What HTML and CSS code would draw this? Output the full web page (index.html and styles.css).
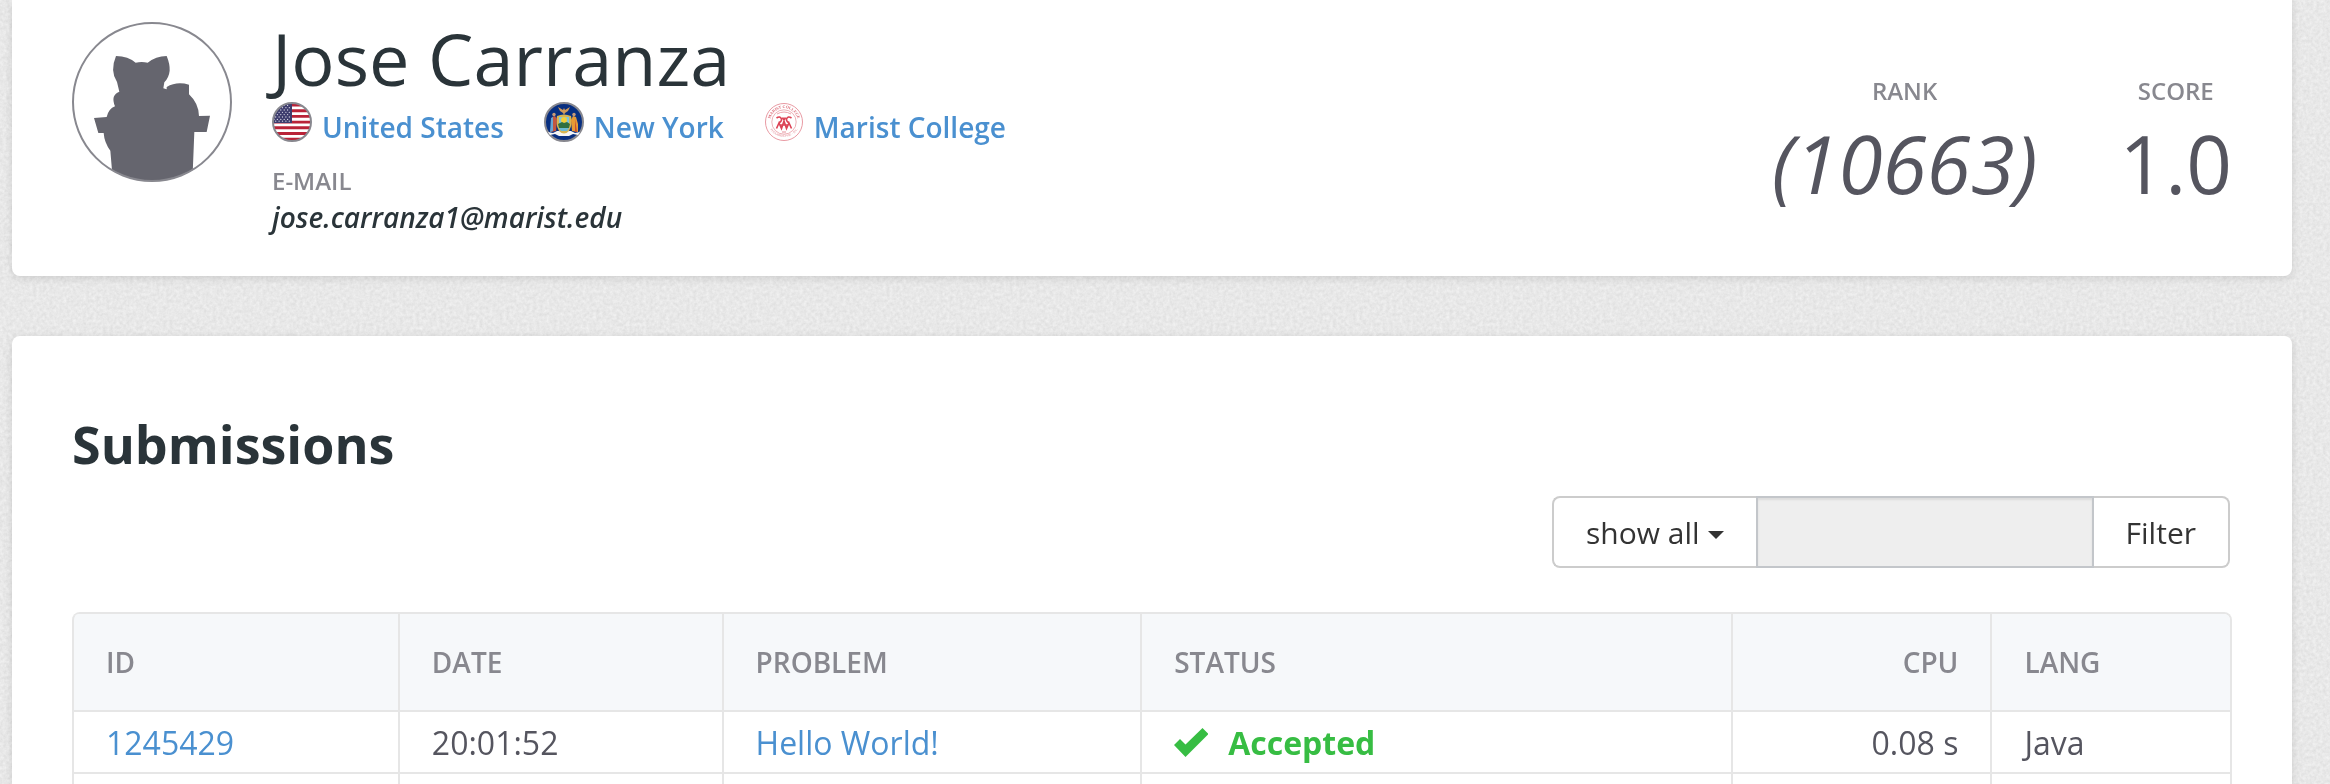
FILE: index.html
```html
<!DOCTYPE html>
<html lang="en">
<head>
<meta charset="utf-8">
<title>Jose Carranza</title>
<link rel="stylesheet" href="styles.css">
</head>
<body>
<svg class="grain" aria-hidden="true">
  <filter id="noise" x="0" y="0" width="100%" height="100%" color-interpolation-filters="sRGB">
    <feTurbulence type="fractalNoise" baseFrequency="0.3" numOctaves="3" seed="4"/>
    <feColorMatrix values="0.1 0 0 0 0.86  0.1 0 0 0 0.86  0.1 0 0 0 0.86  0 0 0 0 1"/>
  </filter>
  <rect width="100%" height="100%" filter="url(#noise)"/>
</svg>
<main class="page">
  <section class="card profile">
    <svg class="avatar" viewBox="216 66 480 480" role="img" aria-label="Profile picture">
      <clipPath id="avatar-clip"><circle cx="456" cy="306" r="238"/></clipPath>
      <path clip-path="url(#avatar-clip)" fill="#65656e" d="M348 168Q385 169 407 188Q425 184 443 188Q467 169 500 168Q510 192 509 212Q507 232 493 247L490 265L500 268V261Q530 243 567 254V283Q596 310 597 348L630 347L620 396H583L577 546H339L331 452Q313 428 311 399H295L282 354L320 351Q326 326 345 319Q331 285 358 275L351 246Q329 213 348 168Z"/>
      <circle cx="456" cy="306" r="237" fill="none" stroke="#88888f" stroke-width="6"/>
    </svg>
    <div class="identity">
      <h1>Jose Carranza</h1>
      <ul class="places">
        <li>
          <svg class="flag" viewBox="0 0 40 40" aria-hidden="true">
            <clipPath id="us"><circle cx="20" cy="20" r="19"/></clipPath>
            <g clip-path="url(#us)">
              <rect width="40" height="40" fill="#fff"/>
              <path stroke="#b92338" stroke-width="2.9" d="M0 3H40M0 8.7H40M0 14.4H40M0 20.1H40M0 25.8H40M0 31.5H40M0 37.2H40"/>
              <rect width="20" height="21" fill="#3e3d6e"/>
              <g stroke="#d5d5e2" stroke-width="1.3" stroke-linecap="round" stroke-dasharray="0 3.4"><path d="M2 3.4H19M2 8H19M2 12.6H19M2 17.4H19"/><path d="M3.7 5.7H19M3.7 10.3H19M3.7 15H19M3.7 19.2H19"/></g>
            </g>
            <circle cx="20" cy="20" r="19" fill="none" stroke="#88888f" stroke-width="2"/>
          </svg>
          <a href="#">United States</a>
        </li>
        <li>
          <svg class="flag" viewBox="0 0 40 40" aria-hidden="true">
            <circle cx="20" cy="20" r="19" fill="#082f80" stroke="#88888f" stroke-width="2"/>
            <path d="M4 30L9 31L13 29H27L31 31L36 30L34 33L29 32L25 34H15L11 32L6 33Z" fill="#f5f5f5"/>
            <path d="M13 14Q20 11 27 14Q29 22 25 29Q20 34 15 29Q11 22 13 14Z" fill="#d7b552"/>
            <path d="M15 15H25V21H15Z" fill="#7ec4df"/>
            <circle cx="20" cy="18" r="3" fill="#f3cf3a"/>
            <path d="M14 22L18 20L20 21L23 20L26 22L25 26H15Z" fill="#2f7040"/>
            <path d="M15 26H25L23 29H17Z" fill="#6cb9d2"/>
            <path d="M14 5L19 8L20 6L21 8L26 5L24 9L21 11L20 13L19 11L16 9Z" fill="#d09a5a"/>
            <path d="M8 15L11 14L13 17L12 29L7 30Z" fill="#c2563f"/>
            <path d="M7 16L9 15L9 29L6 30Z" fill="#6aa6d0"/>
            <path d="M29 14L32 15L34 22L34 30L28 29L27 18Z" fill="#e69a35"/>
            <path d="M31 17L33 30H31Z" fill="#c84f30"/>
            <circle cx="10" cy="12.500" r="1.700" fill="#c99b77"/><circle cx="30" cy="12.500" r="1.700" fill="#c99b77"/>
          </svg>
          <a href="#">New York</a>
        </li>
        <li>
          <svg class="flag" viewBox="0 0 40 40" aria-hidden="true">
            <g fill="none" stroke="#e58e98"><circle cx="20" cy="20" r="18.500" stroke-width=".9"/><circle cx="20" cy="20" r="12.200" stroke-width=".7"/></g>
            <path id="seal-top" d="M6.100 20A13.900 13.900 0 0 1 33.900 20" fill="none"/>
            <path id="seal-low" d="M4.500 24A16.500 16.500 0 0 0 35.500 24" fill="none"/>
            <text class="seal-text"><textPath href="#seal-top" startOffset="50%">MARIST COLLEGE</textPath></text>
            <text class="seal-text seal-small"><textPath href="#seal-low" startOffset="50%">POUGHKEEPSIE · N.Y.</textPath></text>
            <path d="M12.500 16Q16 13.500 17.500 17Q18 19 15 21M27.500 16Q24 13.500 22.500 17Q22 19 25 21M18.500 15.500L20 18L21.500 15.500M12.500 26.500L15 21L17.500 26.500L20 19L22.500 26.500L25 21L27.500 26.500M16 23H24" fill="none" stroke="#dc4355" stroke-width="1.600"/>
            <path d="M13 12Q20 8 27 12" fill="none" stroke="#eda4ac"/>
            <path d="M18 30H22" stroke="#e58e98"/>
          </svg>
          <a href="#">Marist College</a>
        </li>
      </ul>
      <dl class="contact">
        <dt>E-MAIL</dt>
        <dd>jose.carranza1@marist.edu</dd>
      </dl>
    </div>
    <dl class="stats">
      <div><dt>RANK</dt><dd class="unofficial">(10663)</dd></div>
      <div><dt>SCORE</dt><dd>1.0</dd></div>
    </dl>
  </section>

  <section class="card submissions">
    <h2>Submissions</h2>
    <form class="filter">
      <button type="button" class="btn btn-first">show all<span class="caret"></span></button>
      <input type="text" class="query" aria-label="Filter value" disabled>
      <button type="submit" class="btn btn-last">Filter</button>
    </form>
    <table class="table">
      <colgroup><col class="c-id"><col class="c-date"><col class="c-problem"><col class="c-status"><col class="c-cpu"><col class="c-lang"></colgroup>
      <thead>
        <tr><th>ID</th><th>DATE</th><th>PROBLEM</th><th>STATUS</th><th class="num">CPU</th><th>LANG</th></tr>
      </thead>
      <tbody>
        <tr>
          <td><a href="#">1245429</a></td>
          <td>20:01:52</td>
          <td><a href="#">Hello World!</a></td>
          <td><span class="accepted"><svg class="check" viewBox="0 0 34 29" aria-hidden="true"><path d="M0 17L6 11L11.500 16.500L28.500 0L34.500 6L11.500 29Z" fill="#37bd43"/></svg>Accepted</span></td>
          <td class="num">0.08 s</td>
          <td>Java</td>
        </tr>
        <tr><td></td><td></td><td></td><td></td><td></td><td></td></tr>
      </tbody>
    </table>
  </section>
</main>
</body>
</html>
```
FILE: styles.css
```css
* {
  box-sizing: border-box;
}

body {
  margin: 0;
  height: 100vh;
  overflow: hidden;
  background: #e8e8e8;
  color: #55555f;
  font-family: "Open Sans", "Noto Sans", sans-serif;
  font-size: 32px;
}

h1, h2, ul, dl, dd {
  margin: 0;
  padding: 0;
}

a {
  color: #4a90d0;
  text-decoration: none;
}

.grain {
  position: fixed;
  inset: 0;
  z-index: -1;
  width: 100%;
  height: 100%;
}

.page {
  display: flex;
  flex-direction: column;
  gap: 60px;
  padding: 0 38px 0 12px;
}

.card {
  background: #fff;
  border-radius: 8px;
  box-shadow: 0 2px 8px rgba(0, 0, 0, 0.12);
}

.profile {
  display: flex;
  align-items: flex-start;
  gap: 40px;
  padding: 22px 60px 40px;
  border-radius: 0 0 8px 8px;
}

.avatar {
  flex: none;
  width: 160px;
  height: 160px;
}

.identity {
  flex: 1;
}

h1 {
  color: #2a3439;
  font-size: 72px;
  font-weight: 400;
  line-height: 72px;
}

.places {
  display: flex;
  gap: 40px;
  margin-top: 8px;
  list-style: none;
}

.places li {
  display: flex;
  align-items: flex-start;
  gap: 10px;
  font-size: 28px;
  font-weight: 600;
  line-height: 50px;
}

.flag {
  width: 40px;
  height: 40px;
}

.seal-text {
  fill: #d9606e;
  font: 700 4px "Liberation Serif", serif;
  text-anchor: middle;
}

.seal-small {
  fill: #e9a0a8;
  font-size: 3px;
}

dt {
  color: #88888f;
  font-size: 24px;
  font-weight: 600;
  line-height: 34px;
}

.contact {
  margin-top: 12px;
}

.contact dd {
  color: #2a3439;
  font-size: 28px;
  font-style: italic;
  font-weight: 600;
  line-height: 38px;
}

.stats {
  display: flex;
  gap: 82px;
  padding-top: 52px;
  text-align: center;
}

.stats dd {
  font-size: 80px;
  line-height: 110px;
}

.unofficial {
  font-style: italic;
}

.submissions {
  padding: 60px;
}

h2 {
  color: #2a3439;
  font-size: 52px;
  font-weight: 700;
  line-height: 96px;
}

.filter {
  display: flex;
  justify-content: flex-end;
  margin: 4px 2px 44px;
}

.btn {
  height: 72px;
  padding: 0 32px;
  border: 2px solid #ccc;
  background: #fff;
  color: #333;
  font-family: inherit;
  font-size: 30px;
}

.btn-first {
  display: flex;
  align-items: center;
  gap: 8px;
  border-right: 0;
  border-radius: 8px 0 0 8px;
}

.btn-last {
  border-left: 0;
  border-radius: 0 8px 8px 0;
}

.caret {
  margin-top: 6px;
  border: 8px solid transparent;
  border-top-color: #333;
  border-bottom: 0;
}

.query {
  width: 338px;
  height: 72px;
  border: 2px solid #c3c6ca;
  border-radius: 0;
  background: #eee;
  box-shadow: inset 0 2px 2px rgba(0, 0, 0, 0.08);
}

.table {
  width: 100%;
  table-layout: fixed;
  border: 2px solid #e6e6e6;
  border-left: 0;
  border-radius: 8px;
  border-spacing: 0;
}

.c-id { width: 15.1%; }
.c-date { width: 15%; }
.c-problem { width: 19.4%; }
.c-status { width: 27.4%; }
.c-cpu { width: 12%; }
.c-lang { width: 11.1%; }

.table th,
.table td {
  padding: 0 32px;
  border-left: 2px solid #e6e6e6;
  text-align: left;
}

.table th {
  height: 96px;
  background: #f6f8fa;
  color: #88888f;
  font-size: 28px;
  font-weight: 600;
}

.table th:first-child {
  border-top-left-radius: 6px;
}

.table th:last-child {
  border-top-right-radius: 6px;
}

.table td {
  height: 62px;
  border-top: 2px solid #e6e6e6;
}

.table .num {
  text-align: right;
}

.accepted {
  display: flex;
  align-items: center;
  gap: 20px;
  color: #37bd43;
  font-weight: 700;
}

.check {
  width: 34px;
  height: 29px;
}
```
